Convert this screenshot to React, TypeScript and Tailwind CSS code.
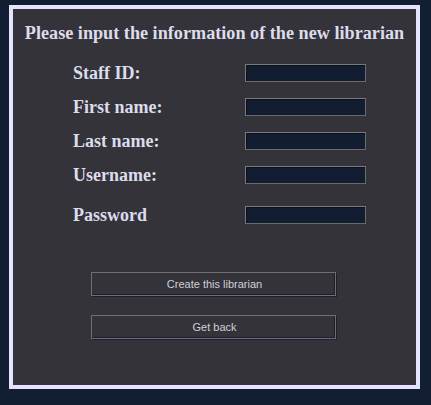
import React from "react";

const serif = { fontFamily: '"Liberation Serif", "Times New Roman", serif' };

function Row({ label, className = "" }: { label: string; className?: string }) {
  return (
    <div className={`flex items-center pl-[60px] ${className}`}>
      <span className="w-[172px] text-[18px] font-bold text-[#dcdcec] leading-[18px]" style={serif}>
        {label}
      </span>
      <input
        className="w-[121px] h-[18px] bg-[#131d31] border border-t-[#7a7a7a] border-l-[#7a7a7a] border-r-[#6a6a6a] border-b-[#6a6a6a] shadow-[inset_1px_1px_0_0_#0c1220] outline-none"
        type="text"
      />
    </div>
  );
}

function Btn({ children }: { children: React.ReactNode }) {
  return (
    <button
      className="w-[245px] h-[24px] bg-[#343339] border border-[#6f6f73] shadow-[inset_-1px_-1px_0_0_#1a2030,1px_1px_0_0_#1a2030] text-[11px] text-[#d0d0d8] flex items-center justify-center pt-[1px] pl-[3px]"
      style={{ fontFamily: '"Liberation Sans", Arial, sans-serif' }}
    >
      {children}
    </button>
  );
}

export default function App() {
  return (
    <div className="w-[431px] h-[405px] bg-[#121e31] pt-[5px] pl-[9px]">
      <div className="w-[411px] h-[384px] border-4 border-[#e4e4fe] bg-[#343339] flex flex-col">
        <h1
          className="text-center text-[18.2px] font-bold text-[#dcdcec] leading-[20px] mt-[14px]"
          style={serif}
        >
          Please input the information of the new librarian
        </h1>
        <div className="flex flex-col mt-[21px]">
          <Row label="Staff ID:" />
          <Row label="First name:" className="mt-[16px]" />
          <Row label="Last name:" className="mt-[16px]" />
          <Row label="Username:" className="mt-[16px]" />
          <Row label="Password" className="mt-[22px]" />
        </div>
        <div className="flex flex-col items-center gap-[19px] mt-[48px] pr-[3px]">
          <Btn>Create this librarian</Btn>
          <Btn>Get back</Btn>
        </div>
      </div>
    </div>
  );
}
